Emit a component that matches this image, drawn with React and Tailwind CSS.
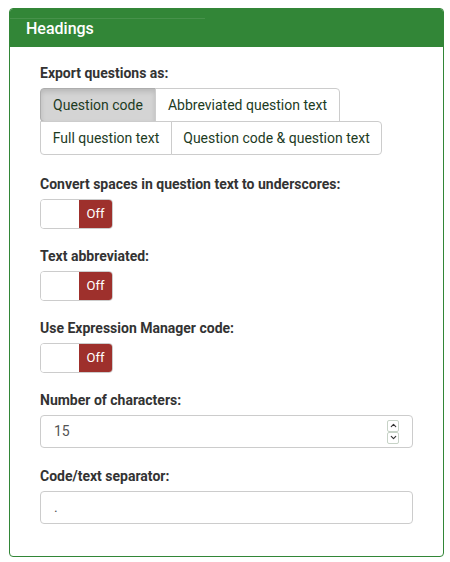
import { ChevronUp, ChevronDown } from 'lucide-react'

const font = { fontFamily: 'Roboto, "Liberation Sans", sans-serif' }

function Label({ children }) {
  return <div className="mb-[5px] text-[14px] font-bold leading-[20px] text-[#333]">{children}</div>
}

function Toggle() {
  return (
    <div className="flex h-[30px] w-[73px] overflow-hidden rounded-[4px] border border-[#ccc]">
      <span className="w-[38px] bg-white" />
      <span className="flex flex-1 items-center justify-center bg-[#9e302c] text-[13px] text-white">Off</span>
    </div>
  )
}

function SegButton({ children, active, className = '' }) {
  return (
    <span
      className={
        'flex h-[34px] shrink-0 items-center justify-center whitespace-nowrap border text-[14px] text-[#1d3b1f] ' +
        (active ? 'border-[#adadad] bg-[#d4d4d4] shadow-[inset_0_3px_5px_rgba(0,0,0,0.125)] ' : 'border-[#ccc] bg-white ') +
        className
      }
    >
      {children}
    </span>
  )
}

export default function App() {
  return (
    <div className="min-h-[562px] bg-white pl-[9px] pr-[6px] pt-[8px]" style={font}>
      <section className="h-[549px] overflow-hidden rounded-[4px] border border-[#328637]">
        <header className="bg-[#328637] pb-[8px] pt-[9px]">
          <div className="h-px w-[195px] bg-white/10" />
          <h1 className="pl-[16px] text-[16px] font-medium leading-[20px] text-white">Headings</h1>
        </header>

        <div className="px-[30px] pt-[16px]">
          <Label>Export questions as:</Label>
          <div className="flex flex-col items-start">
            <div className="flex">
              <SegButton active className="w-[116px] rounded-tl-[4px] rounded-bl-[4px]">Question code</SegButton>
              <SegButton className="-ml-px w-[185px] rounded-tr-[4px]">Abbreviated question text</SegButton>
            </div>
            <div className="-mt-px flex">
              <SegButton className="w-[132px] rounded-bl-[4px]">Full question text</SegButton>
              <SegButton className="-ml-px w-[211px] rounded-br-[4px] rounded-tr-[4px]">Question code &amp; question text</SegButton>
            </div>
          </div>

          <div className="mt-[19px]">
            <Label>Convert spaces in question text to underscores:</Label>
            <Toggle />
          </div>

          <div className="mt-[17px]">
            <Label>Text abbreviated:</Label>
            <Toggle />
          </div>

          <div className="mt-[17px]">
            <Label>Use Expression Manager code:</Label>
            <Toggle />
          </div>

          <div className="mt-[17px]">
            <Label>Number of characters:</Label>
            <div className="flex h-[33px] w-[373px] items-center justify-between rounded-[4px] border border-[#ccc] pl-[13px] pr-[13px]">
              <span className="text-[14px] text-[#555]">15</span>
              <span className="flex flex-col">
                <span className="flex h-[12px] w-[12px] items-center justify-center rounded-[2px] border border-[#c7d3c7]">
                  <ChevronUp size={9} strokeWidth={3} className="text-[#333]" />
                </span>
                <span className="flex h-[12px] w-[12px] items-center justify-center rounded-[2px] border border-[#c7d3c7]">
                  <ChevronDown size={9} strokeWidth={3} className="text-[#333]" />
                </span>
              </span>
            </div>
          </div>

          <div className="mt-[18px]">
            <Label>Code/text separator:</Label>
            <div className="flex h-[33px] w-[373px] items-center rounded-[4px] border border-[#ccc] pl-[13px]">
              <span className="text-[14px] text-[#555]">.</span>
            </div>
          </div>
        </div>
      </section>
    </div>
  )
}
